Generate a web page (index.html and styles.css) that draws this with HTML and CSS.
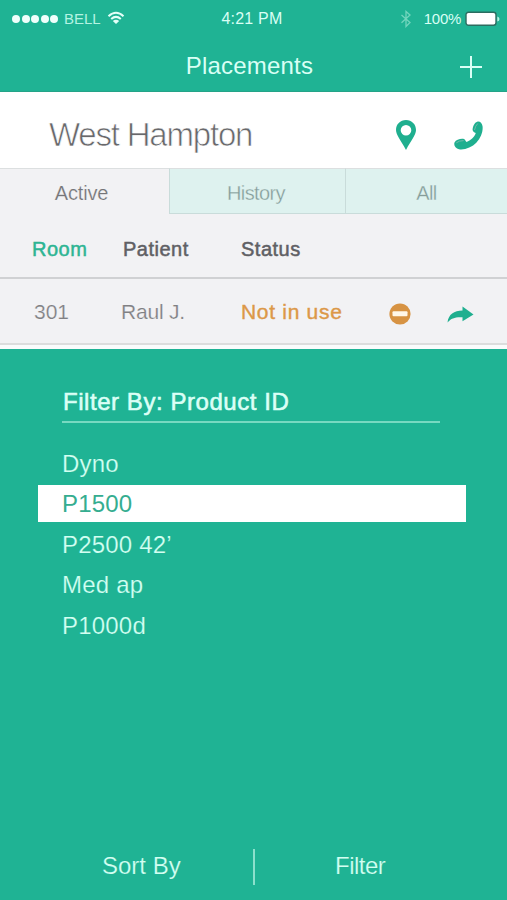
FILE: index.html
```html
<!DOCTYPE html>
<html lang="en">
<head>
<meta charset="utf-8">
<title>Placements</title>
<link rel="stylesheet" href="styles.css">
</head>
<body>
<div class="screen">
  <header class="top">
    <div class="status">
      <div class="carrier">
        <span class="dots"><i></i><i></i><i></i><i></i><i></i></span>
        <span class="bell">BELL</span>
        <svg class="wifi" width="18" height="14" viewBox="0 0 18 14" fill="none" stroke="#e3fff8" stroke-width="2"><path d="M1.5 5.2Q9-1.7 16.5 5.2"/><path d="M4.2 8Q9 3.8 13.8 8"/><path d="M9 13 5.8 9.9Q9 7.4 12.2 9.9Z" fill="#e3fff8" stroke="none"/></svg>
      </div>
      <span class="time">4:21 PM</span>
      <div class="power">
        <svg class="bluetooth" width="12" height="18" viewBox="0 0 12 18" fill="none" stroke="#72d5bd" stroke-width="1.3"><path d="M1.5 5 10 12.5 6 16.5V1.5L10 5 1.5 12.8"/></svg>
        <span class="percent">100%</span>
        <svg width="35" height="16" viewBox="0 0 35 16"><rect x="1" y="1.2" width="30" height="13" rx="2.5" fill="#fff" stroke="#2c6c60" stroke-width="1.4"/><path d="M32.3 5.5Q34.5 6 34.5 8t-2.2 2.5Z" fill="#b5f3e3"/></svg>
      </div>
    </div>
    <div class="titlebar">
      <h1>Placements</h1>
      <svg class="plus" width="22" height="22" viewBox="0 0 22 22" stroke="#d9fff5" stroke-width="2"><path d="M11 0V22M0 11H22"/></svg>
    </div>
  </header>
  <section class="place">
    <h2>West Hampton</h2>
    <svg class="pin" width="20" height="30" viewBox="0 0 20 30"><path fill="#1faf8f" fill-rule="evenodd" d="M10 0C4.2 0 0 4.4 0 10c0 5 4.5 9.500 10 20 5.500-10.500 10-15 10-20C20 4.400 15.800 0 10 0Zm0 5a5.300 5.300 0 1 1 0 10.600A5.300 5.300 0 0 1 10 5Z"/></svg>
    <svg class="phone" width="29" height="29" viewBox="0 0 29 29"><path fill="#1faf8f" d="M.5 21.500C2 18.500 7 17.300 10 18c1 .2 1.500 2 2.600 3C16.500 19.500 20.500 16 21.800 12c-1.800-.6-3.300-1.800-3.200-3.500C19 5 20.500 1.600 23.200.7c2.600-.7 4.800 1.200 5.300 4.300.8 5-1.500 11.800-6 16.500-4.700 5-12 7.600-17.500 6.700C1.500 27.600-.5 24.500.5 21.500Z"/><path d="M2.300 21.800Q5 19.600 9.600 19.600M20.500 9Q21.300 4.800 23.800 2.500" fill="none" stroke="#73b9aa" stroke-width="1"/></svg>
  </section>
  <nav class="tabs">
    <span class="tab active">Active</span>
    <span class="tab history">History</span>
    <span class="tab all">All</span>
  </nav>
  <div class="row head">
    <span class="room">Room</span><span class="patient">Patient</span><span class="state">Status</span>
  </div>
  <div class="row entry">
    <span class="room">301</span><span class="patient">Raul J.</span><span class="state">Not in use</span>
    <svg class="minus" width="22" height="22" viewBox="0 0 22 22"><circle cx="11" cy="11" r="10.600" fill="#d79343"/><rect x="3.500" y="8.300" width="15" height="5" rx="1" fill="#fff7e8"/></svg>
    <svg class="share" width="27" height="17" viewBox="0 0 27 17"><path fill="#1faf8f" d="M.5 16.500C1.500 8.500 7 4.600 15.500 4.600V.5L26.500 8.500 15.500 15.300V11.300C8.500 10.900 4.500 12 .5 16.500Z"/></svg>
  </div>
  <section class="panel">
    <h3>Filter By: Product ID</h3>
    <ul>
      <li>Dyno</li>
      <li class="selected">P1500</li>
      <li>P2500 42’</li>
      <li>Med ap</li>
      <li>P1000d</li>
    </ul>
    <footer>
      <span class="sort">Sort By</span>
      <span class="divider"></span>
      <span class="filter">Filter</span>
    </footer>
  </section>
</div>
</body>
</html>
```
FILE: styles.css
```css
* { box-sizing: border-box; margin: 0; padding: 0; }

body {
  font-family: "Liberation Sans", Arial, sans-serif;
  background: #1fb394;
}

h1, h2, h3 { font-weight: normal; }

svg { display: block; flex: none; }

.screen {
  width: 507px;
  height: 900px;
  display: flex;
  flex-direction: column;
  overflow: hidden;
  background: #f2f2f4;
}

.top {
  height: 92px;
  background: #1fb394;
  border-bottom: 1px solid #25a388;
  color: #d9fff5;
}

.status {
  height: 38px;
  display: grid;
  grid-template-columns: 1fr 64px 1fr;
  align-items: center;
  font-size: 15px;
}

.carrier { display: flex; align-items: center; padding-left: 12px; }
.dots { display: flex; gap: 1.500px; }
.dots i { width: 8px; height: 8px; border-radius: 50%; background: #effffb; }
.bell { margin-left: 6px; margin-top: -1px; color: #b5f3e3; }
.wifi { margin-left: 6px; margin-top: -2px; }
.time { font-size: 16px; letter-spacing: .2px; white-space: nowrap; }
.power { display: flex; align-items: center; justify-content: flex-end; padding-right: 7px; }
.bluetooth { margin-right: 12px; }
.percent { margin-right: 4px; margin-top: -1px; letter-spacing: -.3px; }

.titlebar {
  height: 54px;
  display: grid;
  grid-template-columns: 1fr auto 1fr;
  align-items: center;
  padding-top: 1px;
}

.titlebar h1 { grid-column: 2; margin-right: 8px; font-size: 24px; line-height: 54px; letter-spacing: .2px; }
.plus { justify-self: end; margin: 1px 25px 0 0; }

.place {
  height: 76px;
  display: flex;
  align-items: center;
  padding: 9px 24px 0 49px;
  background: #fff;
}

.place h2 {
  width: 347px;
  padding-top: 1px;
  font-size: 33px;
  letter-spacing: -1.200px;
  color: #68686b;
  -webkit-text-stroke: .700px #fff;
}

.phone { margin-left: 38px; margin-top: 1px; }

.tabs {
  height: 46px;
  display: grid;
  grid-template-columns: 169px 176px 162px;
  font-size: 20px;
  line-height: 49px;
  text-align: center;
}

.tab { height: 46px; border-top: 1px solid #dcdfe0; letter-spacing: -.600px; }
.active { color: #757578; letter-spacing: -.2px; padding-right: 6px; -webkit-text-stroke: .2px #f2f2f4; }
.history, .all {
  color: #869c99;
  background: #def2ef;
  border-left: 1px solid #c9dcda;
  border-bottom: 1px solid #c9dcda;
  -webkit-text-stroke: .3px #def2ef;
}
.history { padding-right: 3px; }

.row { display: flex; align-items: center; }
.row span { white-space: nowrap; }

.head {
  height: 65px;
  padding: 7px 0 0 32px;
  border-bottom: 2px solid #d0d1d3;
  font-size: 20px;
  letter-spacing: .5px;
  color: #606064;
  -webkit-text-stroke: .5px;
}
.head .room { width: 91px; color: #2db593; }
.head .patient { width: 118px; }

.entry {
  height: 70px;
  padding: 2px 0 2px 34px;
  border-bottom: 4px solid #fafcfc;
  box-shadow: inset 0 -2px #dcdddd;
  font-size: 21px;
  color: #808083;
}
.entry .room { width: 87px; -webkit-text-stroke: .2px #f2f2f4; }
.entry .patient { width: 120px; letter-spacing: -.2px; -webkit-text-stroke: .2px #f2f2f4; }
.entry .state { width: 148px; letter-spacing: .7px; color: #dc9848; -webkit-text-stroke: .4px; }
.minus { margin-top: 3px; }
.share { margin: 4px 0 0 36px; }

.panel {
  flex: 1;
  display: flex;
  flex-direction: column;
  background: #1fb394;
  color: #d2fff2;
}

.panel h3 {
  width: 378px;
  height: 44px;
  margin: 30px 0 0 62px;
  padding-left: 1px;
  border-bottom: 2px solid #77d9c1;
  font-size: 24px;
  line-height: 45px;
  letter-spacing: .550px;
  color: #dbfff6;
  -webkit-text-stroke: .6px;
}

.panel ul {
  list-style: none;
  padding: 22px 41px 0 38px;
  font-size: 24px;
  letter-spacing: .2px;
}

.panel li { height: 37px; margin-bottom: 3.400px; padding-left: 24px; line-height: 37px; -webkit-text-stroke: .2px #1fb394; }
.panel .selected { background: #fff; color: #35ad90; -webkit-text-stroke: 0; }

.panel footer {
  height: 36px;
  margin-top: auto;
  margin-bottom: 15px;
  display: grid;
  grid-template-columns: 253px 2px 1fr;
  align-items: center;
  font-size: 24px;
  -webkit-text-stroke: .2px #1fb394;
}

.sort { padding-left: 102px; margin-top: -2px; }
.divider { height: 36px; background: #8be0cc; }
.filter { padding-left: 80px; margin-top: -2px; letter-spacing: -.500px; }
```
